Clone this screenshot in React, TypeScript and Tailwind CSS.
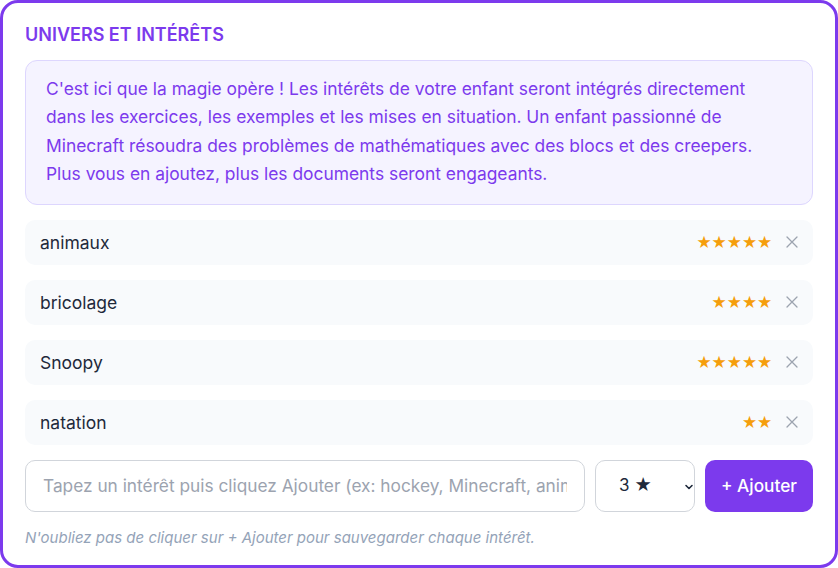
import React from "react";

const interests = [
  { name: "animaux", stars: 5 },
  { name: "bricolage", stars: 4 },
  { name: "Snoopy", stars: 5 },
  { name: "natation", stars: 2 },
];

export default function App() {
  return (
    <div
      className="w-[838px] h-[568px] bg-white"
      style={{ fontFamily: "Inter, 'Noto Sans', sans-serif" }}
    >
      <div className="h-full border-[3px] border-[#7c3aed] rounded-[18px] px-[22px] pt-[20px] flex flex-col">
        <h2 className="text-[18px] leading-[24px] font-semibold text-[#7c3aed]">
          UNIVERS ET INTÉRÊTS
        </h2>
        <div className="mt-[13px] bg-[#f5f3ff] border border-[#ddd6fe] rounded-[12px] pl-[20px] pr-[26px] pt-[14px] pb-[15px]">
          <p className="text-[17.4px] leading-[28.4px] text-[#7c3aed]">
            C'est ici que la magie opère ! Les intérêts de votre enfant seront intégrés directement
            dans les exercices, les exemples et les mises en situation. Un enfant passionné de
            Minecraft résoudra des problèmes de mathématiques avec des blocs et des creepers.
            Plus vous en ajoutez, plus les documents seront engageants.
          </p>
        </div>
        <div className="mt-[15px] flex flex-col gap-[15px]">
          {interests.map((it) => (
            <div
              key={it.name}
              className="h-[45px] bg-[#f8fafc] rounded-[10px] pl-[15px] pr-[15px] flex items-center justify-between"
            >
              <span className="text-[17.5px] leading-[26px] pt-[1px] text-[#1e293b]">{it.name}</span>
              <div className="flex items-center gap-[14px]">
                <span className="text-[15px] leading-none text-[#f59e0b] tracking-[-0.5px]">
                  {"★".repeat(it.stars)}
                </span>
                <svg width="12" height="12" viewBox="0 0 12 12" className="text-[#9ca3af]">
                  <path d="M1 1L11 11M11 1L1 11" stroke="currentColor" strokeWidth="1.3" strokeLinecap="round" />
                </svg>
              </div>
            </div>
          ))}
        </div>
        <div className="mt-[15px] flex gap-[10px]">
          <input
            className="flex-1 min-w-0 h-[52px] border border-[#d1d5db] rounded-[10px] px-[17px] text-[17.3px] text-[#1e293b] placeholder:text-[#9ca3af] outline-none"
            placeholder="Tapez un intérêt puis cliquez Ajouter (ex: hockey, Minecraft, animaux...)"
          />
          <div className="relative w-[100px] h-[52px] border border-[#d1d5db] rounded-[10px] flex items-center pl-[23px] text-[17px] text-[#1e293b]">
            <span>3 ★</span>
            <svg width="10" height="10" viewBox="0 0 10 10" className="absolute right-[0px] top-[21px]">
              <path d="M2 3.5L5 6.5L8 3.5" stroke="#1e293b" strokeWidth="1.6" fill="none" strokeLinecap="round" strokeLinejoin="round" />
            </svg>
          </div>
          <button className="w-[108px] h-[52px] bg-[#7c3aed] rounded-[10px] text-white text-[17.3px] font-medium">
            + Ajouter
          </button>
        </div>
        <p className="mt-[15px] text-[15px] italic text-[#94a3b8]">
          N'oubliez pas de cliquer sur + Ajouter pour sauvegarder chaque intérêt.
        </p>
      </div>
    </div>
  );
}
